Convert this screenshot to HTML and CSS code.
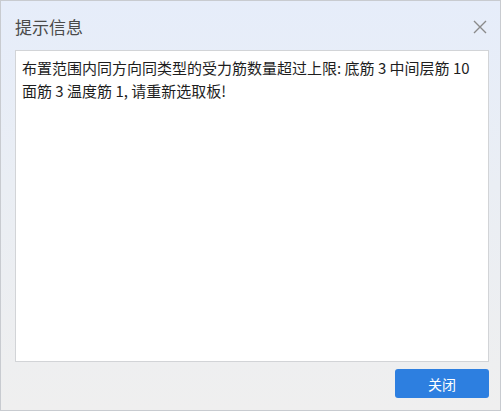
FILE: index.html
```html
<!DOCTYPE html>
<html>
<head>
<meta charset="utf-8">
<link rel="stylesheet" href="styles.css">
</head>
<body>
<div class="dialog">
  <div class="header">
    <div class="title">提示信息</div>
    <div class="close">
      <svg width="14" height="14" viewBox="0 0 14 14"><path d="M1 1 L13 13 M13 1 L1 13" stroke="#8a8a8a" stroke-width="1.4" fill="none"/></svg>
    </div>
  </div>
  <div class="message">布置范围内同方向同类型的受力筋数量超过上限: 底筋 3 中间层筋 10 面筋 3 温度筋 1, 请重新选取板!</div>
  <div class="footer">
    <button class="btn">关闭</button>
  </div>
</div>
</body>
</html>
```
FILE: styles.css
```css
html, body {
  margin: 0;
  padding: 0;
  background: #ffffff;
}
body {
  font-family: "Noto Sans CJK SC", "Noto Sans", sans-serif;
}
.dialog {
  width: 499px;
  height: 409px;
  border: 1px solid #c8cbd0;
  background: linear-gradient(to bottom, #e6edfa 0%, #eaeef4 45%, #efefef 100%);
  display: flex;
  flex-direction: column;
}
.header {
  height: 49px;
  display: flex;
  align-items: center;
  justify-content: space-between;
  padding: 0 13px 0 14px;
}
.title {
  font-size: 17px;
  color: #4a4a4a;
  line-height: 20px;
  margin-top: 2px;
}
.close {
  width: 14px;
  height: 14px;
  display: flex;
  margin-top: 2px;
}
.message {
  margin: 0 11px 0 14px;
  border: 1px solid #d2d4d7;
  background: #ffffff;
  padding: 5px 6px 0 6px;
  box-sizing: border-box;
  height: 312px;
  font-size: 15px;
  line-height: 23px;
  color: #1e1e1e;
}
.footer {
  display: flex;
  justify-content: flex-end;
  padding: 7px 11px 0 0;
}
.btn {
  width: 94px;
  height: 29px;
  border: none;
  border-radius: 3px;
  background: #2d7fe0;
  color: #ffffff;
  font-family: "Noto Sans CJK SC", "Noto Sans", sans-serif;
  font-size: 14px;
  padding: 0;
}
```
